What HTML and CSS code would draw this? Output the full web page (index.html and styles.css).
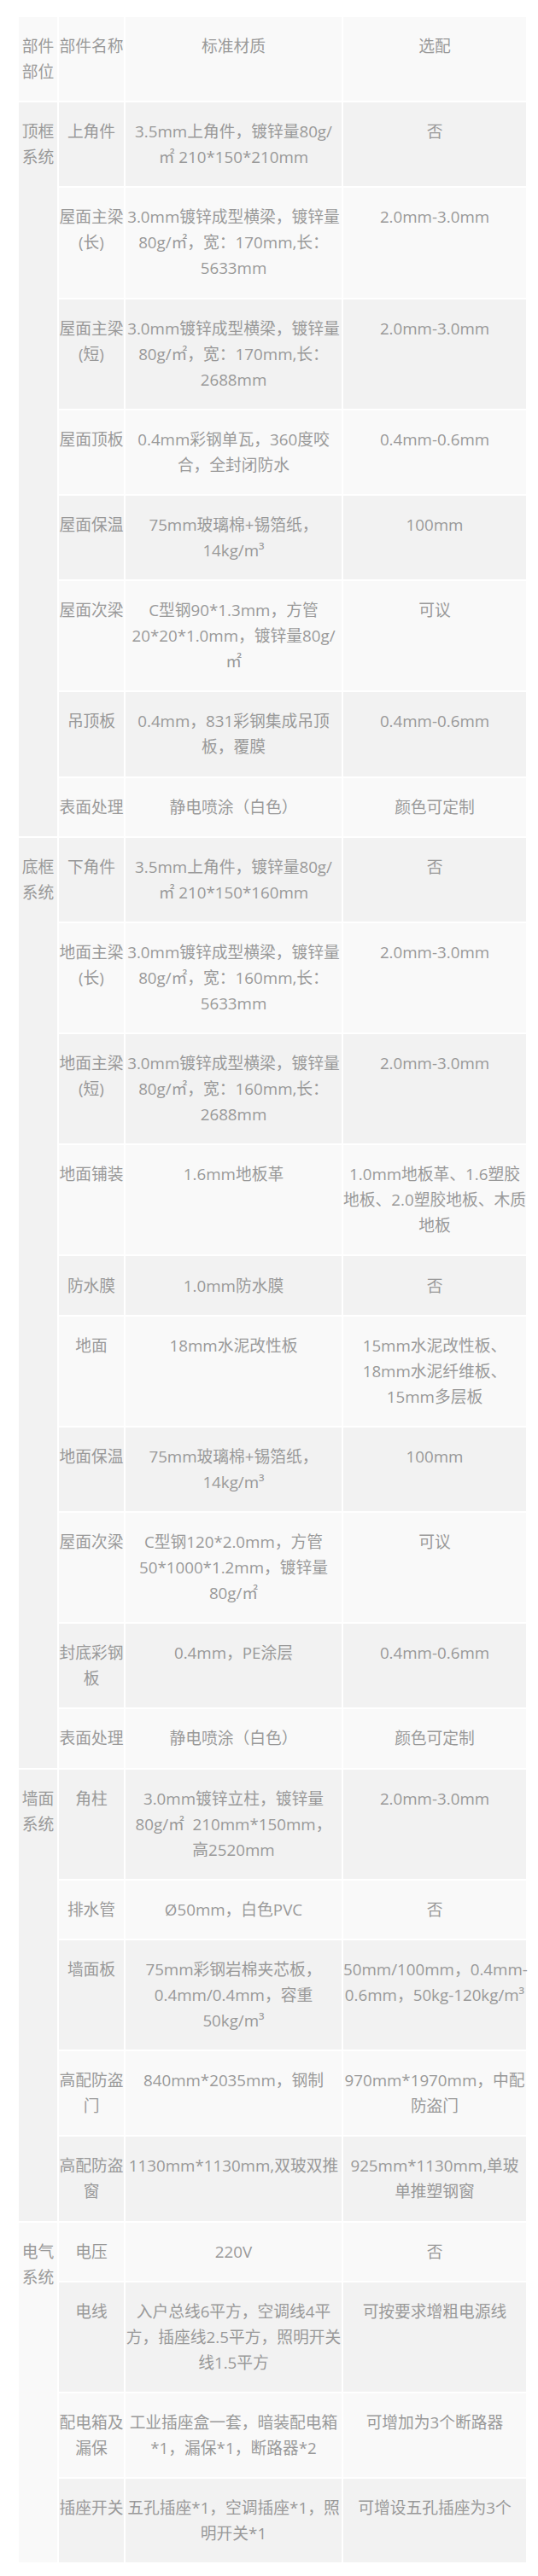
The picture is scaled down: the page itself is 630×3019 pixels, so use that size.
FILE: index.html
```html
<!DOCTYPE html>
<html lang="zh-CN">
<head>
<meta charset="utf-8">
<title>部件材质表</title>
<link rel="stylesheet" href="styles.css">
</head>
<body>
<div class="wrap">
<table class="spec">
<colgroup>
<col class="c-part"><col class="c-name"><col class="c-std"><col class="c-opt">
</colgroup>
<tbody>
<tr><td>部件<br>部位</td><td>部件名称</td><td>标准材质</td><td>选配</td></tr>

<tr><td rowspan="8">顶框<br>系统</td><td>上角件</td><td>3.5mm上角件，镀锌量80g/<br>㎡ 210*150*210mm</td><td>否</td></tr>
<tr><td>屋面主梁<br>(长)</td><td>3.0mm镀锌成型横梁，镀锌量<br>80g/㎡，宽：170mm,长：<br>5633mm</td><td>2.0mm-3.0mm</td></tr>
<tr><td>屋面主梁<br>(短)</td><td>3.0mm镀锌成型横梁，镀锌量<br>80g/㎡，宽：170mm,长：<br>2688mm</td><td>2.0mm-3.0mm</td></tr>
<tr><td>屋面顶板</td><td>0.4mm彩钢单瓦，360度咬<br>合，全封闭防水</td><td>0.4mm-0.6mm</td></tr>
<tr><td>屋面保温</td><td>75mm玻璃棉+锡箔纸，<br>14kg/m³</td><td>100mm</td></tr>
<tr><td>屋面次梁</td><td>C型钢90*1.3mm，方管<br>20*20*1.0mm，镀锌量80g/<br>㎡</td><td>可议</td></tr>
<tr><td>吊顶板</td><td>0.4mm，831彩钢集成吊顶<br>板，覆膜</td><td>0.4mm-0.6mm</td></tr>
<tr><td>表面处理</td><td>静电喷涂（白色）</td><td>颜色可定制</td></tr>

<tr><td rowspan="10">底框<br>系统</td><td>下角件</td><td>3.5mm上角件，镀锌量80g/<br>㎡ 210*150*160mm</td><td>否</td></tr>
<tr><td>地面主梁<br>(长)</td><td>3.0mm镀锌成型横梁，镀锌量<br>80g/㎡，宽：160mm,长：<br>5633mm</td><td>2.0mm-3.0mm</td></tr>
<tr><td>地面主梁<br>(短)</td><td>3.0mm镀锌成型横梁，镀锌量<br>80g/㎡，宽：160mm,长：<br>2688mm</td><td>2.0mm-3.0mm</td></tr>
<tr><td>地面铺装</td><td>1.6mm地板革</td><td>1.0mm地板革、1.6塑胶<br>地板、2.0塑胶地板、木质<br>地板</td></tr>
<tr><td>防水膜</td><td>1.0mm防水膜</td><td>否</td></tr>
<tr><td>地面</td><td>18mm水泥改性板</td><td>15mm水泥改性板、<br>18mm水泥纤维板、<br>15mm多层板</td></tr>
<tr><td>地面保温</td><td>75mm玻璃棉+锡箔纸，<br>14kg/m³</td><td>100mm</td></tr>
<tr><td>屋面次梁</td><td>C型钢120*2.0mm，方管<br>50*1000*1.2mm，镀锌量<br>80g/㎡</td><td>可议</td></tr>
<tr><td>封底彩钢<br>板</td><td>0.4mm，PE涂层</td><td>0.4mm-0.6mm</td></tr>
<tr><td>表面处理</td><td>静电喷涂（白色）</td><td>颜色可定制</td></tr>

<tr><td rowspan="5">墙面<br>系统</td><td>角柱</td><td>3.0mm镀锌立柱，镀锌量<br>80g/㎡&nbsp; 210mm*150mm，<br>高2520mm</td><td>2.0mm-3.0mm</td></tr>
<tr><td>排水管</td><td>Ø50mm，白色PVC</td><td>否</td></tr>
<tr><td>墙面板</td><td>75mm彩钢岩棉夹芯板，<br>0.4mm/0.4mm，容重<br>50kg/m³</td><td>50mm/100mm，0.4mm-<br>0.6mm，50kg-120kg/m³</td></tr>
<tr><td>高配防盗<br>门</td><td>840mm*2035mm，钢制</td><td>970mm*1970mm，中配<br>防盗门</td></tr>
<tr><td>高配防盗<br>窗</td><td>1130mm*1130mm,双玻双推</td><td>925mm*1130mm,单玻<br>单推塑钢窗</td></tr>

<tr><td rowspan="4">电气<br>系统</td><td>电压</td><td>220V</td><td>否</td></tr>
<tr><td>电线</td><td>入户总线6平方，空调线4平<br>方，插座线2.5平方，照明开关<br>线1.5平方</td><td>可按要求增粗电源线</td></tr>
<tr><td>配电箱及<br>漏保</td><td>工业插座盒一套，暗装配电箱<br>*1，漏保*1，断路器*2</td><td>可增加为3个断路器</td></tr>
<tr><td>插座开关</td><td>五孔插座*1，空调插座*1，照<br>明开关*1</td><td>可增设五孔插座为3个</td></tr>
</tbody>
</table>
</div>
</body>
</html>
```

FILE: styles.css
```css
html, body {
  margin: 0;
  padding: 0;
  background: #ffffff;
}

.wrap {
  padding: 18px 12px 0 20px;
}

.spec {
  table-layout: fixed;
  width: 598px;
  border-collapse: separate;
  border-spacing: 2px;
  font-family: "Open Sans", "Noto Sans CJK SC", sans-serif;
  font-size: 18.75px;
  line-height: 30px;
  color: #999999;
}

.c-part { width: 45px; }
.c-name { width: 76px; }
.c-std { width: 253px; }
.c-opt { width: 214px; }

.spec td {
  padding: 19.1px 0;
  text-align: center;
  vertical-align: top;
  white-space: nowrap;
}

.spec tr:nth-child(odd) td {
  background: #f9f9f9;
}

.spec tr:nth-child(even) td {
  background: #f2f2f2;
}
```
